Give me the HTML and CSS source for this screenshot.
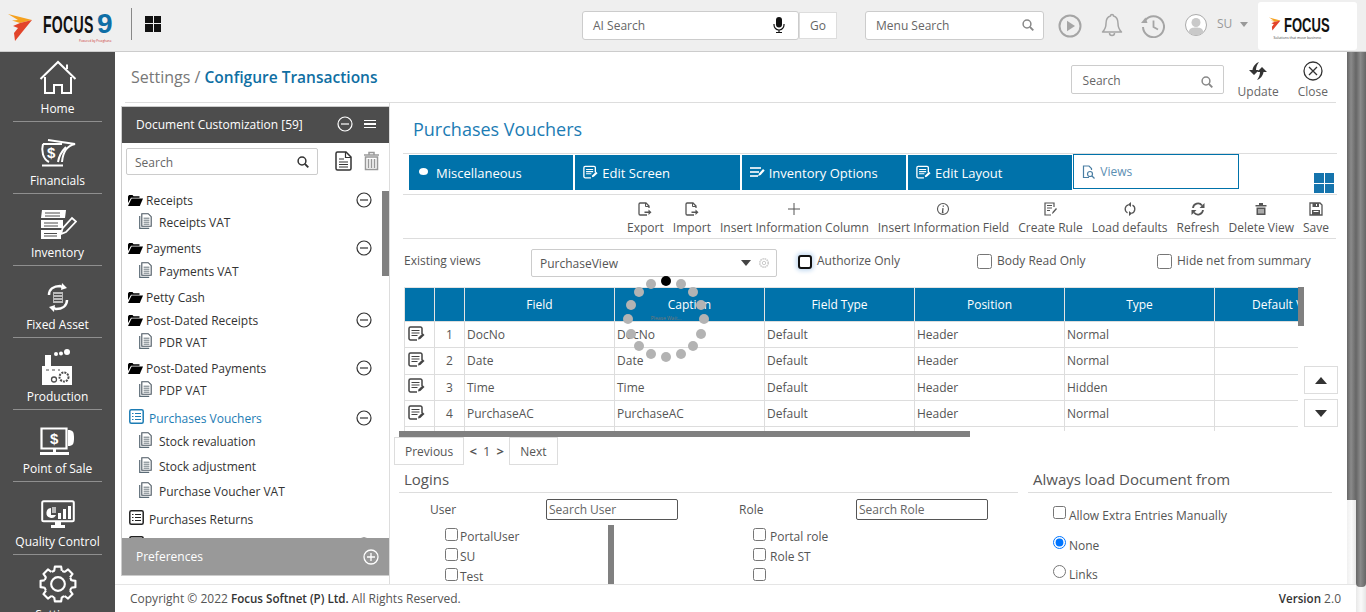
FILE: index.html
```html
<!DOCTYPE html>
<html lang="en">
<head>
  <meta charset="UTF-8" />
  <meta name="viewport" content="width=device-width, initial-scale=1.0"/>
  <title>Configure Transactions</title>
  <link rel="stylesheet" href="styles.css">
</head>
<body>
  <svg class="defs" xmlns="http://www.w3.org/2000/svg">
    <symbol id="i-minus" viewBox="0 0 16 16"><circle cx="8" cy="8" r="7" fill="none" stroke="currentColor" stroke-width="1.2"/><path d="M4 8h8" stroke="currentColor" stroke-width="1.2"/></symbol>
    <symbol id="i-folder" viewBox="0 0 15 12"><path fill="currentColor" d="M0 2.5 1 1h3.500l1 1.200h6v1.600H3L0 9z"/><path fill="currentColor" d="M3.600 4.600H15L11.800 12H0z"/></symbol>
    <symbol id="i-sheet" viewBox="0 0 13 16"><path d="M.7 3v12.300h9.500" fill="none" stroke="#5b6b76" stroke-width="1.200"/><path d="M2.800.7h6.400l3 3v9.600H2.800z" fill="#fff" stroke="#4a5660" stroke-width="1.100"/><path d="M4.600 5.200h5.800M4.600 7.200h5.800M4.600 9.200h5.800M4.600 11.200h5.800" stroke="#69747c"/></symbol>
    <symbol id="i-listbox" viewBox="0 0 15 15"><rect x=".8" y=".8" width="13.400" height="13.400" rx="1.500" fill="none" stroke="currentColor" stroke-width="1.500"/><path d="M3 4.500h1.500M3 7.500h1.500M3 10.500h1.500M6 4.500h6M6 7.500h6M6 10.500h6" stroke="currentColor" stroke-width="1.200"/></symbol>
    <symbol id="i-edit" viewBox="0 0 17 16"><path d="M14 8V2.500A1.500 1.500 0 0 0 12.500 1h-10A1.500 1.500 0 0 0 1 2.500v10A1.500 1.500 0 0 0 2.500 14H9" fill="none" stroke="currentColor" stroke-width="1.500"/><path d="M3.500 4.500h8M3.500 7h8M3.500 9.500h6" stroke="currentColor" stroke-width="1.200"/><path d="m10 13.500.6-2.300 4.200-4 1.700 1.700-4.200 4z" fill="currentColor"/></symbol>
    <symbol id="i-docarrow" viewBox="0 0 14 14"><path d="M9 13H2.200A1.200 1.200 0 0 1 1 11.800V2.200A1.200 1.200 0 0 1 2.200 1h5.800L11 4v2" fill="none" stroke="currentColor" stroke-width="1.300"/><path d="M7.500 1v3.500H11" fill="none" stroke="currentColor"/><path d="M6.500 9.500h4V7.500l3 2.700-3 2.700v-2h-4z" fill="currentColor"/></symbol>
    <symbol id="i-search" viewBox="0 0 12 12"><circle cx="5" cy="5" r="3.900" fill="none" stroke="currentColor" stroke-width="1.500"/><path d="m8 8 3.300 3.300" stroke="currentColor" stroke-width="1.800"/></symbol>
    <symbol id="i-flash" viewBox="0 0 24 27"><path fill="#f5a11e" d="M0 0 24 6 12 9 4 6.500 10 6z"/><path fill="#e2442a" d="M24 6 15 17 7 27 6 19 10 14 5 12 12 9z"/></symbol>
  </svg>

  <div class="app">
    <header class="topbar">
      <div class="brand">
        <svg class="brand-mark"><use href="#i-flash"/></svg>
        <span class="brand-name">FOCUS</span><span class="brand-nine">9</span>
        <span class="brand-sub">Powered by Proxghana</span>
      </div>
      <span class="brand-rule"></span>
      <div class="apps-icon"><i></i><i></i><i></i><i></i></div>

      <div class="ai-search">
        <span>AI Search</span>
        <svg class="mic" viewBox="0 0 12 16"><rect x="3" y="0" width="6" height="10.500" rx="3" fill="#111"/><path d="M1 7v1a5 5 0 0 0 10 0V7M6 13v2M3 15.500h6" fill="none" stroke="#111" stroke-width="1.200"/></svg>
      </div>
      <button class="go">Go</button>
      <div class="menu-search">
        <span>Menu Search</span>
        <svg class="search-ico" viewBox="0 0 12 12"><use href="#i-search"/></svg>
      </div>

      <svg class="top-ico play" viewBox="0 0 24 24"><circle cx="12" cy="12" r="10.500" fill="none" stroke="currentColor" stroke-width="2"/><path d="M9 6.800v10.400l8-5.200z" fill="currentColor"/></svg>
      <svg class="top-ico bell" viewBox="0 0 22 24"><path d="M11 1.500c1 0 1.500.7 1.500 1.500 3.500 1 4.500 4 4.500 7.500 0 4 1 6 3.500 8.500h-19C4 16.500 5 14.500 5 10.500 5 7 6 4 9.500 3c0-.8.500-1.500 1.500-1.500zM8.500 20c0 3.300 5 3.300 5 0" fill="none" stroke="currentColor" stroke-width="1.500" stroke-linejoin="round"/></svg>
      <svg class="top-ico hist" viewBox="0 0 24 24"><path d="M4 6.500A10.500 10.500 0 1 1 2 13" fill="none" stroke="currentColor" stroke-width="2"/><path d="M0 9h6.500L4.500 3.500z" fill="currentColor"/><path d="M12.500 6.500V13l4.500 2.500" fill="none" stroke="currentColor" stroke-width="1.800"/></svg>
      <svg class="top-ico avatar" viewBox="0 0 22 22"><circle cx="11" cy="11" r="10.500" fill="#fff" stroke="#aaa"/><circle cx="11" cy="8.500" r="4.500" fill="#c9c9c9"/><path d="M3.500 18c1-4 4-4.500 7.500-4.500s6.500.5 7.500 4.500a10.500 10.500 0 0 1-15 0z" fill="#c9c9c9"/></svg>
      <span class="user-name">SU</span>
      <span class="user-caret"></span>
      <div class="corner-logo">
        <svg class="corner-mark"><use href="#i-flash"/></svg>
        <div class="corner-text">
          <span class="corner-name">FOCUS</span>
          <span class="corner-sub">Solutions that move business</span>
        </div>
      </div>
    </header>

    <div class="shell">
      <nav class="sidebar">
        <a class="nav-item">
          <svg class="nav-ico" width="38" height="38" viewBox="0 0 38 38"><path d="M1.500 20 19 3l17.500 17M28 10V5.500M6 18v16h9v-8h8v8h9V18" fill="none" stroke="#fff" stroke-width="2"/></svg>
          <span>Home</span>
        </a>
        <a class="nav-item">
          <svg class="nav-ico" width="38" height="32" viewBox="0 0 38 32"><path d="M4 7c-2 7 0 15 6 18M4 7h19M3 28.500h21M9 3l27 4c-8 2-12 7-13 18M27 10c-4 4-7 9-8 15" fill="none" stroke="#fff" stroke-width="2"/><text x="8" y="21" class="nav-glyph">$</text></svg>
          <span>Financials</span>
        </a>
        <a class="nav-item">
          <svg class="nav-ico" width="38" height="32" viewBox="0 0 38 32"><path d="M3 1h24l-1 8H2zM2 11h22v8H2zM2 21h20v9H2z" fill="#fff"/><path d="M6 4h15M6 7h15M5 14h14M5 17h14M5 24.500h13M5 27h13" stroke="#4d4d4d"/><path d="m22 25 1.500-5.500L33 9l4 3.500L27 23z" fill="#4d4d4d" stroke="#fff" stroke-width="1.800"/></svg>
          <span>Inventory</span>
        </a>
        <a class="nav-item">
          <svg class="nav-ico" width="26" height="30" viewBox="0 0 26 30"><path d="M4 12C4 6 9 3 15 3l4 2M22 17c0 6-5 9-11 9l-4-2" fill="none" stroke="#fff" stroke-width="2.500"/><path d="m17 0 5 5-6 2zM9 29l-5-5 6-2z" fill="#fff"/><path d="M8 9h10v11H8z" fill="#bbb"/><path d="M9 11.500h8M9 14.500h8M9 17.500h8" stroke="#4d4d4d"/></svg>
          <span>Fixed Asset</span>
        </a>
        <a class="nav-item">
          <svg class="nav-ico" width="32" height="36" viewBox="0 0 32 36"><path d="M3 6h6v15H3zM0 17h30v19H0z" fill="#fff"/><circle cx="25" cy="3" r="3" fill="#fff"/><circle cx="19" cy="4.500" r="2" fill="#fff"/><circle cx="14" cy="5" r="2" fill="#fff"/><circle cx="22" cy="28" r="4.500" fill="none" stroke="#4d4d4d" stroke-width="2" stroke-dasharray="2 1"/><circle cx="12" cy="30.500" r="2.500" fill="none" stroke="#4d4d4d" stroke-width="1.300"/><path d="M4 21h3M10 21h3M16 21h2" stroke="#4d4d4d"/></svg>
          <span>Production</span>
        </a>
        <a class="nav-item">
          <svg class="nav-ico" width="38" height="30" viewBox="0 0 38 30"><path d="M2.500 1.500h25v20h-25z" fill="none" stroke="#fff" stroke-width="2.200"/><path d="M29 3c5 0 6 2 6 8s-1 8-6 8z" fill="#fff"/><path d="M14 21h3v4h-3zM1 25h29v3H1z" fill="#fff"/><text x="11" y="17" class="nav-glyph">$</text></svg>
          <span>Point of Sale</span>
        </a>
        <a class="nav-item">
          <svg class="nav-ico" width="34" height="30" viewBox="0 0 34 30"><rect x="1.200" y="1.200" width="31.600" height="20" rx="1.500" fill="none" stroke="#fff" stroke-width="2"/><path d="M14 22h6v3h-6zM10 25h14v3H10z" fill="#fff"/><path d="M10 8a5 5 0 1 0 5 7h-5z" fill="#fff"/><path d="M11 7l4 0 0 6h-4z" fill="#bbb"/><path d="M17 13h3v6h-3zM22 9h3v10h-3zM27 6h3v13h-3z" fill="#fff"/></svg>
          <span>Quality Control</span>
        </a>
        <a class="nav-item">
          <svg class="nav-ico" width="38" height="38" viewBox="0 0 36 36"><circle cx="18" cy="18" r="13" fill="none" stroke="#fff" stroke-width="2" stroke-dasharray="2.950 7.260" stroke-dashoffset="-3.630"/><g fill="none" stroke="#fff" stroke-width="2" stroke-linejoin="round"><path id="tooth" d="M14.400 5.500 15 1.500h6l.6 4"/><use href="#tooth" transform="rotate(45 18 18)"/><use href="#tooth" transform="rotate(90 18 18)"/><use href="#tooth" transform="rotate(135 18 18)"/><use href="#tooth" transform="rotate(180 18 18)"/><use href="#tooth" transform="rotate(225 18 18)"/><use href="#tooth" transform="rotate(270 18 18)"/><use href="#tooth" transform="rotate(315 18 18)"/></g><circle cx="18" cy="18" r="6.500" fill="none" stroke="#fff" stroke-width="2"/></svg>
          <span>Settings</span>
        </a>
      </nav>

      <div class="workspace">
        <div class="workspace-main">
          <div class="page">
            <div class="page-head">
              <h1 class="crumbs">Settings / <b>Configure Transactions</b></h1>
              <div class="head-search">
                <span>Search</span>
                <svg class="search-ico" viewBox="0 0 12 12"><use href="#i-search"/></svg>
              </div>
              <a class="head-btn update">
                <svg width="20" height="20" viewBox="0 0 20 20"><path d="M1 9h3.500C5 5 8 2 11 1 9 4 8 6 8 9h3l-5 5z" fill="#333"/><path d="M19 11h-3.500c-.5 4-3.500 7-6.500 8 2-3 3-5 3-8H9l5-5z" fill="#333"/></svg>
                <span>Update</span>
              </a>
              <a class="head-btn close">
                <svg width="20" height="20" viewBox="0 0 20 20"><circle cx="10" cy="10" r="9" fill="none" stroke="#333" stroke-width="1.300"/><path d="m6 6 8 8M14 6l-8 8" stroke="#333" stroke-width="1.300"/></svg>
                <span>Close</span>
              </a>
            </div>

            <div class="page-body">
              <aside class="panel">
                <div class="panel-head">
                  <span>Document Customization [59]</span>
                  <svg class="panel-minus" width="16" height="16"><use href="#i-minus"/></svg>
                  <span class="burger"><i></i><i></i><i></i></span>
                </div>
                <div class="panel-search">
                  <div class="tree-search">
                    <span>Search</span>
                    <svg class="search-ico" viewBox="0 0 12 12"><use href="#i-search"/></svg>
                  </div>
                  <svg class="doc-ico" width="17" height="20" viewBox="0 0 17 20"><path d="M1 2.500A1.500 1.500 0 0 1 2.500 1H11l5 5v11.500a1.500 1.500 0 0 1-1.500 1.500h-12A1.500 1.500 0 0 1 1 17.500z" fill="none" stroke="#333" stroke-width="1.500"/><path d="M10.500 1v5.500H16M4 8h5M4 11h9M4 13.500h9M4 16h9" fill="none" stroke="#333" stroke-width="1.200"/></svg>
                  <svg class="trash-ico" width="17" height="20" viewBox="0 0 17 20"><path d="M1 4h15M6 3.500V1.500h5v2M2.500 6h12v12.500h-12zM5.500 8v9M8.500 8v9M11.500 8v9" fill="none" stroke="#999" stroke-width="1.500"/></svg>
                </div>
                <div class="tree">
                  <span class="tree-thumb"></span>
                  <div class="row group"><svg class="ico-folder"><use href="#i-folder"/></svg><span>Receipts</span><svg class="row-minus"><use href="#i-minus"/></svg></div>
                  <div class="row sub"><svg class="ico-sheet"><use href="#i-sheet"/></svg><span>Receipts VAT</span></div>
                  <div class="row group gap26"><svg class="ico-folder"><use href="#i-folder"/></svg><span>Payments</span><svg class="row-minus"><use href="#i-minus"/></svg></div>
                  <div class="row sub gap23"><svg class="ico-sheet"><use href="#i-sheet"/></svg><span>Payments VAT</span></div>
                  <div class="row group gap26"><svg class="ico-folder"><use href="#i-folder"/></svg><span>Petty Cash</span></div>
                  <div class="row group gap23"><svg class="ico-folder"><use href="#i-folder"/></svg><span>Post-Dated Receipts</span><svg class="row-minus"><use href="#i-minus"/></svg></div>
                  <div class="row sub"><svg class="ico-sheet"><use href="#i-sheet"/></svg><span>PDR VAT</span></div>
                  <div class="row group gap26"><svg class="ico-folder"><use href="#i-folder"/></svg><span>Post-Dated Payments</span><svg class="row-minus"><use href="#i-minus"/></svg></div>
                  <div class="row sub"><svg class="ico-sheet"><use href="#i-sheet"/></svg><span>PDP VAT</span></div>
                  <div class="row group gap28 active"><svg class="ico-list"><use href="#i-listbox"/></svg><span>Purchases Vouchers</span><svg class="row-minus"><use href="#i-minus"/></svg></div>
                  <div class="row sub gap23"><svg class="ico-sheet"><use href="#i-sheet"/></svg><span>Stock revaluation</span></div>
                  <div class="row sub gap25"><svg class="ico-sheet"><use href="#i-sheet"/></svg><span>Stock adjustment</span></div>
                  <div class="row sub gap25"><svg class="ico-sheet"><use href="#i-sheet"/></svg><span>Purchase Voucher VAT</span></div>
                  <div class="row group gap28"><svg class="ico-list"><use href="#i-listbox"/></svg><span>Purchases Returns</span></div>
                  <div class="row group gap26"><svg class="ico-list"><use href="#i-listbox"/></svg><span></span><svg class="row-minus"><use href="#i-minus"/></svg></div>
                </div>
                <div class="panel-foot">
                  <span>Preferences</span>
                  <svg width="16" height="16" viewBox="0 0 16 16"><circle cx="8" cy="8" r="7" fill="none" stroke="#fff" stroke-width="1.300"/><path d="M4 8h8M8 4v8" stroke="#fff" stroke-width="1.300"/></svg>
                </div>
              </aside>

              <section class="detail">
                <h2 class="detail-title">Purchases Vouchers</h2>

                <div class="tabs">
                  <a class="tab"><svg width="11" height="9" viewBox="0 0 11 9"><ellipse cx="5.500" cy="4.500" rx="4.500" ry="3.500" fill="#fff"/></svg>Miscellaneous</a>
                  <a class="tab"><svg class="tab-edit" width="15" height="15"><use href="#i-edit"/></svg>Edit Screen</a>
                  <a class="tab"><svg class="tab-inv" width="15" height="13" viewBox="0 0 15 13"><path d="M0 1h11v2H0zM0 5h9v2H0zM0 9h8v2H0z" fill="#cfe3ef"/><path d="m8 10 1-2.500L13 3l1.700 1.500-4 4.500z" fill="#fff"/></svg>Inventory Options</a>
                  <a class="tab"><svg class="tab-edit" width="15" height="15"><use href="#i-edit"/></svg>Edit Layout</a>
                  <a class="tab current"><svg width="14" height="14" viewBox="0 0 14 14"><path d="M7 12.500H1.500V1h5.500l2.500 2.500V5" fill="none" stroke="#4a7ea3" stroke-width="1.200"/><circle cx="8" cy="9" r="2.500" fill="none" stroke="#4a7ea3" stroke-width="1.200"/><path d="m10 11 2.500 2.500" stroke="#4a7ea3" stroke-width="1.300"/></svg>Views</a>
                  <div class="view-grid"><i></i><i></i><i></i><i></i></div>
                </div>

                <div class="toolbar">
                  <a class="tool"><svg width="14" height="14"><use href="#i-docarrow"/></svg><span>Export</span></a>
                  <a class="tool"><svg width="14" height="14"><use href="#i-docarrow"/></svg><span>Import</span></a>
                  <a class="tool"><svg width="14" height="14" viewBox="0 0 14 14"><path d="M7 1v12M1 7h12" stroke="currentColor"/></svg><span>Insert Information Column</span></a>
                  <a class="tool"><svg width="14" height="14" viewBox="0 0 14 14"><circle cx="7" cy="7" r="5.500" fill="none" stroke="currentColor" stroke-width="1.100"/><path d="M7.300 3.500v1.300M7 6.200l-.5 4.300h1" fill="none" stroke="currentColor" stroke-width="1.300"/></svg><span>Insert Information Field</span></a>
                  <a class="tool"><svg width="14" height="14" viewBox="0 0 14 14"><path d="M11 5V1H2v12h6" fill="none" stroke="currentColor" stroke-width="1.200"/><path d="M4 3.500h5M4 6h5M4 8.500h3" stroke="currentColor"/><path d="m9 12 .5-2L13 6l1 1-3.500 4z" fill="currentColor"/></svg><span>Create Rule</span></a>
                  <a class="tool"><svg width="14" height="14" viewBox="0 0 14 14"><path d="M9.500 3.200a4.300 4.300 0 0 1-1 8M4.500 10.800a4.300 4.300 0 0 1 1-8" fill="none" stroke="currentColor" stroke-width="1.300"/><path d="M8 0v5L5 2.500zM6 14V9l3 2.500z" fill="currentColor"/></svg><span>Load defaults</span></a>
                  <a class="tool"><svg width="14" height="14" viewBox="0 0 14 14"><path d="M2 6a5 5 0 0 1 9-2.500M12 8a5 5 0 0 1-9 2.500" fill="none" stroke="currentColor" stroke-width="1.800"/><path d="M13.500 1v5h-5zM.5 13V8h5z" fill="currentColor"/></svg><span>Refresh</span></a>
                  <a class="tool"><svg width="14" height="14" viewBox="0 0 14 14"><path d="M1.500 3h11V4.500h-11zM5 3V1h4v2zM2.500 5.500h9V13h-9z" fill="currentColor"/><path d="M5 7v4.500M7 7v4.500M9 7v4.500" stroke="#fff"/></svg><span>Delete View</span></a>
                  <a class="tool"><svg width="14" height="14" viewBox="0 0 14 14"><path d="M1 1h10l2 2v10H1z" fill="none" stroke="currentColor" stroke-width="1.300"/><path d="M3.500 1h6.500v4H3.500zM3 8h8v5H3z" fill="currentColor"/><path d="M7.500 2v2M4.500 9.500h5" stroke="#fff"/></svg><span>Save</span></a>
                </div>

                <div class="view-form">
                  <label class="view-label">Existing views</label>
                  <div class="view-select">
                    <span>PurchaseView</span>
                    <span class="select-caret"></span>
                    <svg width="12" height="12" viewBox="0 0 12 12"><circle cx="6" cy="6" r="4.200" fill="none" stroke="#ccc" stroke-width="1.600" stroke-dasharray="1.600 .6"/><circle cx="6" cy="6" r="1.700" fill="none" stroke="#ccc"/></svg>
                  </div>
                  <label class="view-check first"><input type="checkbox" class="big-check focused"><span>Authorize Only</span></label>
                  <label class="view-check"><input type="checkbox" class="big-check"><span>Body Read Only</span></label>
                  <label class="view-check"><input type="checkbox" class="big-check"><span>Hide net from summary</span></label>
                </div>

                <div class="grid-row">
                  <div class="grid-clip">
                    <table class="fields">
                      <colgroup><col class="c-sm"><col class="c-sm"><col class="c-lg"><col class="c-lg"><col class="c-lg"><col class="c-lg"><col class="c-lg"><col class="c-lg"></colgroup>
                      <thead>
                        <tr><th></th><th></th><th>Field</th><th>Caption</th><th>Field Type</th><th>Position</th><th>Type</th><th>Default Value</th></tr>
                      </thead>
                      <tbody>
                        <tr><td class="cell-ico"><svg width="17" height="16"><use href="#i-edit"/></svg></td><td class="cell-num">1</td><td>DocNo</td><td>DocNo</td><td>Default</td><td>Header</td><td>Normal</td><td></td></tr>
                        <tr><td class="cell-ico"><svg width="17" height="16"><use href="#i-edit"/></svg></td><td class="cell-num">2</td><td>Date</td><td>Date</td><td>Default</td><td>Header</td><td>Normal</td><td></td></tr>
                        <tr><td class="cell-ico"><svg width="17" height="16"><use href="#i-edit"/></svg></td><td class="cell-num">3</td><td>Time</td><td>Time</td><td>Default</td><td>Header</td><td>Hidden</td><td></td></tr>
                        <tr><td class="cell-ico"><svg width="17" height="16"><use href="#i-edit"/></svg></td><td class="cell-num">4</td><td>PurchaseAC</td><td>PurchaseAC</td><td>Default</td><td>Header</td><td>Normal</td><td></td></tr>
                        <tr><td></td><td></td><td></td><td></td><td></td><td></td><td></td><td></td></tr>
                      </tbody>
                    </table>
                  </div>
                  <span class="grid-vthumb"></span>
                  <div class="move-btns">
                    <button class="move"><span class="tri-up"></span></button>
                    <button class="move"><span class="tri-down"></span></button>
                  </div>
                </div>
                <div class="grid-hthumb"></div>

                <div class="pager">
                  <button class="page-btn">Previous</button>
                  <span class="page-nums"><b>&lt;</b><span>1</span><b>&gt;</b></span>
                  <button class="page-btn">Next</button>
                </div>

                <div class="bottom">
                  <div class="logins">
                    <h3 class="sec-title">Logins</h3>
                    <div class="who-cols">
                      <div class="who">
                        <div class="who-head"><label>User</label><input class="who-input" type="text" placeholder="Search User"></div>
                        <div class="who-body">
                          <div class="who-list">
                            <label class="who-item"><input type="checkbox"><span>PortalUser</span></label>
                            <label class="who-item"><input type="checkbox"><span>SU</span></label>
                            <label class="who-item"><input type="checkbox"><span>Test</span></label>
                          </div>
                          <span class="who-thumb"></span>
                        </div>
                      </div>
                      <div class="who role">
                        <div class="who-head"><label>Role</label><input class="who-input" type="text" placeholder="Search Role"></div>
                        <div class="who-body">
                          <div class="who-list">
                            <label class="who-item"><input type="checkbox"><span>Portal role</span></label>
                            <label class="who-item"><input type="checkbox"><span>Role ST</span></label>
                            <label class="who-item"><input type="checkbox"><span></span></label>
                          </div>
                        </div>
                      </div>
                    </div>
                  </div>
                  <div class="load-from">
                    <h3 class="sec-title">Always load Document from</h3>
                    <div class="load-opts">
                      <label class="load-opt"><input type="checkbox"><span>Allow Extra Entries Manually</span></label>
                      <label class="load-opt"><input type="radio" name="load" checked><span>None</span></label>
                      <label class="load-opt"><input type="radio" name="load"><span>Links</span></label>
                    </div>
                  </div>
                </div>

                <svg class="spinner" width="90" height="90" viewBox="-45 -45 90 90">
                  <g fill="#b3b3b3">
                    <circle cx="15" cy="-36" r="5"/><circle cx="27" cy="-28" r="5"/><circle cx="35" cy="-15" r="5"/><circle cx="38" cy="-1" r="5"/>
                    <circle cx="35" cy="14" r="5"/><circle cx="27" cy="26" r="5"/><circle cx="15" cy="34" r="5"/><circle cx="0" cy="37" r="5"/>
                    <circle cx="-15" cy="34" r="5"/><circle cx="-27" cy="26" r="5"/><circle cx="-35" cy="14" r="5"/><circle cx="-38" cy="-1" r="5"/>
                    <circle cx="-35" cy="-15" r="5"/><circle cx="-27" cy="-28" r="5"/><circle cx="-15" cy="-36" r="5"/>
                  </g>
                  <circle cx="0" cy="-39" r="5" fill="#000"/>
                  <text x="0" y="0" class="spin-text">Please Wait...</text>
                </svg>
              </section>
            </div>
          </div>
          <div class="inner-scroll"><span></span></div>
        </div>
        <footer class="footer">
          <span>Copyright © 2022 <b>Focus Softnet (P) Ltd.</b> All Rights Reserved.</span>
          <span><b>Version</b> 2.0</span>
        </footer>
      </div>
      <div class="outer-scroll"><span></span></div>
    </div>
  </div>
</body>
</html>
```

FILE: styles.css
```css
* {
  margin: 0;
  padding: 0;
  box-sizing: border-box;
  font-family: 'Open Sans', sans-serif;
}

body {
  background: #fff;
  color: #555;
  font-size: 12px;
  overflow: hidden;
}

.defs {
  display: none;
}

button {
  background: #fff;
  color: #555;
}

.app {
  width: 1366px;
  height: 612px;
  display: flex;
  flex-direction: column;
  overflow: hidden;
}

/* top bar */
.topbar {
  height: 52px;
  flex: none;
  background: #efefef;
  border-bottom: 1px solid #ccc;
  display: flex;
  align-items: center;
  padding-left: 8px;
  position: relative;
  z-index: 2;
}

.brand {
  width: 115px;
  height: 40px;
  display: flex;
  align-items: center;
  position: relative;
}

.brand-mark {
  width: 24px;
  height: 27px;
  margin-right: 11px;
  margin-top: 4px;
}

.brand-name {
  font-family: 'Liberation Sans', sans-serif;
  font-size: 23.500px;
  font-weight: 700;
  color: #111;
  letter-spacing: .4px;
  transform: scaleX(.6);
  transform-origin: left;
  width: 54px;
}

.brand-nine {
  font-family: 'Liberation Sans', sans-serif;
  font-size: 28px;
  font-weight: 700;
  color: #0e6ea6;
  margin-top: -4px;
}

.brand-sub {
  position: absolute;
  left: 71px;
  top: 33px;
  font-size: 3px;
  color: #c33;
  white-space: nowrap;
}

.brand-rule {
  width: 1px;
  height: 32px;
  background: #888;
  margin-left: 8px;
  margin-top: -3px;
}

.apps-icon {
  width: 16px;
  height: 16px;
  margin-left: 13px;
  margin-top: -4px;
  display: grid;
  grid-template-columns: 1fr 1fr;
  gap: 1px;
}

.apps-icon i {
  background: #111;
}

.ai-search,
.menu-search {
  height: 29px;
  background: #fff;
  border: 1px solid #ccc;
  border-radius: 3px;
  display: flex;
  align-items: center;
  padding: 0 10px;
  color: #666;
  margin-top: -1px;
}

.ai-search {
  width: 217px;
  margin-left: 421px;
  justify-content: space-between;
}

.mic {
  width: 12px;
  height: 16px;
  margin-right: 3px;
}

.go {
  width: 38px;
  height: 27px;
  border: 1px solid #ddd;
  margin-top: -1px;
  font-size: 12px;
  color: #666;
}

.menu-search {
  width: 179px;
  margin-left: 28px;
  justify-content: space-between;
  padding-right: 9px;
}

.search-ico {
  width: 12px;
  height: 12px;
  color: #888;
}

.top-ico {
  flex: none;
  color: #a5a5a5;
}

.play {
  width: 24px;
  height: 24px;
  margin-left: 14px;
}

.bell {
  width: 22px;
  height: 24px;
  margin-left: 19px;
  margin-top: -1px;
}

.hist {
  width: 24px;
  height: 24px;
  margin-left: 18px;
}

.avatar {
  width: 22px;
  height: 22px;
  margin-left: 20px;
  margin-top: -2px;
}

.user-name {
  margin-left: 10px;
  width: 16px;
  color: #999;
  margin-top: -4px;
}

.user-caret {
  width: 0;
  height: 0;
  margin-left: 7px;
  margin-top: -3px;
  border-left: 4px solid transparent;
  border-right: 4px solid transparent;
  border-top: 5px solid #999;
}

.corner-logo {
  width: 99px;
  height: 48px;
  margin-left: 10px;
  background: #fff;
  border-radius: 3px;
  display: flex;
  padding: 10px 0 0 11px;
}

.corner-mark {
  width: 22px;
  height: 24px;
}

.corner-text {
  display: flex;
  flex-direction: column;
  margin-left: 3px;
  margin-top: 3px;
}

.corner-name {
  font-family: 'Liberation Sans', sans-serif;
  font-size: 21px;
  line-height: 20px;
  font-weight: 700;
  color: #111;
  transform: scaleX(.62);
  transform-origin: left;
}

.corner-sub {
  font-size: 3.500px;
  line-height: 6px;
  color: #444;
  white-space: nowrap;
  margin-left: -10px;
}

/* sidebar */
.shell {
  flex: 1;
  display: flex;
  min-height: 0;
}

.sidebar {
  width: 115px;
  flex: none;
  background: #4d4d4d;
  display: flex;
  flex-direction: column;
  align-items: center;
  overflow: hidden;
  padding-top: 0;
}

.nav-item {
  width: 89px;
  height: 72.200px;
  flex: none;
  border-bottom: 1px solid #8f8f8f;
  display: flex;
  flex-direction: column;
  align-items: center;
  color: #fff;
  position: relative;
}

.nav-item:first-child {
  height: 69.500px;
}

.nav-item:last-child {
  border-bottom: 0;
}

.nav-ico {
  position: absolute;
  left: 50%;
  transform: translateX(-50%);
  bottom: 24px;
}

.nav-item span {
  position: absolute;
  bottom: 4px;
  white-space: nowrap;
  line-height: 17px;
}

.nav-glyph {
  font-family: 'Liberation Sans', sans-serif;
  font-size: 15px;
  font-weight: 700;
  fill: #fff;
}

/* workspace */
.workspace {
  width: 1241px;
  flex: none;
  display: flex;
  flex-direction: column;
}

.workspace-main {
  height: 532px;
  flex: none;
  display: flex;
}

.page {
  width: 1232px;
  flex: none;
}

.inner-scroll {
  width: 9px;
  flex: none;
  background: linear-gradient(90deg, #f0f0f0, #fafafa, #e6e6e6);
}

.inner-scroll span {
  display: block;
  height: 448px;
  background: linear-gradient(90deg, #666, #8a8a8a 45%, #666);
}

.outer-scroll {
  width: 10px;
  flex: none;
  background: linear-gradient(90deg, #e8e8e8, #fafafa, #e6e6e6);
}

.outer-scroll span {
  display: block;
  height: 535px;
  border-radius: 0 0 4px 4px;
  background: linear-gradient(90deg, #666, #8a8a8a 45%, #666);
}

.page-head {
  height: 51px;
  margin: 0 11px 0 10px;
  border-bottom: 1px solid #ddd;
  display: flex;
  align-items: center;
  padding-left: 6px;
}

.crumbs {
  font-size: 16px;
  font-weight: 400;
  color: #777;
  margin-top: -1px;
}

.crumbs b {
  font-size: 15.500px;
  font-weight: 600;
  color: #0f6fa3;
}

.head-search {
  width: 153px;
  height: 29px;
  margin-left: auto;
  margin-top: 5px;
  border: 1px solid #ccc;
  border-radius: 2px;
  display: flex;
  align-items: center;
  justify-content: space-between;
  padding: 1px 10px 0 11px;
  color: #666;
}

.head-search .search-ico {
  margin-top: 4px;
}

.head-btn {
  display: flex;
  flex-direction: column;
  align-items: center;
  color: #666;
  line-height: 17px;
  margin-top: 7px;
}

.update {
  margin-left: 14px;
}

.close {
  margin-left: 19px;
  margin-right: 8px;
}

.head-btn svg {
  margin-bottom: 2px;
}

.page-body {
  height: 481px;
  display: flex;
}

/* tree panel */
.panel {
  width: 268px;
  height: 470px;
  flex: none;
  margin: 3px 0 0 6px;
  border: 1px solid #ccc;
  border-right: 0;
  display: flex;
  flex-direction: column;
}

.panel-head {
  height: 36px;
  flex: none;
  background: #4d4d4d;
  color: #fff;
  display: flex;
  align-items: center;
  padding: 0 0 2px 14px;
}

.panel-minus {
  color: #fff;
  margin-left: auto;
}

.burger {
  width: 12px;
  margin: 0 13px 0 11px;
  display: flex;
  flex-direction: column;
  gap: 2px;
}

.burger i {
  height: 1.500px;
  background: #fff;
}

.panel-search {
  height: 38px;
  flex: none;
  display: flex;
  align-items: flex-start;
  padding: 5px 0 0 4px;
}

.tree-search {
  width: 192px;
  height: 27px;
  border: 1px solid #ccc;
  border-radius: 2px;
  display: flex;
  align-items: center;
  justify-content: space-between;
  padding: 1px 8px 0;
  color: #666;
}

.tree-search .search-ico {
  color: #333;
}

.doc-ico {
  margin: 3px 0 0 17px;
}

.trash-ico {
  margin: 3px 0 0 11px;
}

.tree {
  flex: 1;
  min-height: 0;
  overflow: hidden;
  position: relative;
  padding-top: 8px;
}

.tree-thumb {
  position: absolute;
  right: 0;
  top: 10px;
  width: 7px;
  height: 85px;
  background: #808080;
}

.row {
  height: 22px;
  display: flex;
  align-items: center;
  color: #333;
  white-space: nowrap;
}

.gap23 {
  margin-top: 1px;
}

.gap25 {
  margin-top: 3px;
}

.gap26 {
  margin-top: 4px;
}

.gap28 {
  margin-top: 6px;
}

.group {
  padding-left: 6px;
}

.sub {
  padding-left: 17px;
}

.ico-folder {
  width: 15px;
  height: 12px;
  color: #000;
  margin-right: 3px;
}

.ico-list {
  width: 15px;
  height: 15px;
  margin-right: 5px;
  margin-left: 1px;
  margin-top: -3px;
  color: #222;
}

.ico-sheet {
  width: 13px;
  height: 16px;
  margin-right: 7px;
  margin-top: -3px;
}

.row-minus {
  width: 16px;
  height: 16px;
  margin-left: auto;
  margin-right: 17px;
  color: #333;
}

.active,
.active .ico-list {
  color: #1c7cb4;
}

.active .row-minus {
  color: #333;
}

.panel-foot {
  height: 37px;
  flex: none;
  background: #999;
  color: #fff;
  display: flex;
  align-items: center;
  justify-content: space-between;
  padding: 0 10px 0 14px;
  position: relative;
}

/* detail */
.detail {
  width: 957px;
  flex: none;
  height: 481px;
  border-left: 1px solid #ddd;
  overflow: hidden;
  position: relative;
}

.detail-title {
  height: 50px;
  padding: 14px 0 0 23px;
  font-size: 18px;
  line-height: 25px;
  font-weight: 400;
  color: #1c7cb4;
}

.tabs {
  height: 42px;
  margin: 0 9px 0 13px;
  border-top: 1px solid #ddd;
  border-bottom: 1px solid #ddd;
  display: flex;
  align-items: flex-start;
  padding-left: 6px;
  gap: 2px;
}

.tab {
  width: 164.330px;
  height: 35px;
  margin-top: 1px;
  background: #0072aa;
  color: #fff;
  font-size: 13px;
  display: flex;
  align-items: center;
  padding-left: 8px;
}

.tab svg {
  margin-right: 4px;
}

.tab-edit {
  color: #fff;
}

.tab:first-child {
  padding-left: 9px;
}

.tab:first-child svg {
  margin: -3px 7px 0 0;
}

.tab.current {
  width: 166px;
  height: 35px;
  margin: 0 0 0 -1px;
  background: #fff;
  border: 1px solid #0072aa;
  color: #5c8fb3;
  font-size: 12px;
  padding-left: 8px;
}

.view-grid {
  width: 20px;
  height: 20px;
  margin: 19px 3px 0 auto;
  display: grid;
  grid-template-columns: 1fr 1fr;
  gap: 1px;
}

.view-grid i {
  background: #1574ad;
}

.toolbar {
  height: 44px;
  margin: 0 10px 0 13px;
  border-bottom: 1px solid #ddd;
  display: flex;
  justify-content: flex-end;
  gap: 9px;
  padding: 7px 7px 0 0;
}

.tool {
  display: flex;
  flex-direction: column;
  align-items: center;
  white-space: nowrap;
  color: #555;
  line-height: 17px;
}

.tool svg {
  margin-bottom: 3px;
}

.view-form {
  height: 48px;
  display: flex;
  align-items: flex-start;
  padding: 10px 0 0 14px;
}

.view-label {
  width: 127px;
  line-height: 24px;
  font-size: 12px;
}

.view-select {
  width: 246px;
  height: 28px;
  border: 1px solid #ccc;
  border-radius: 2px;
  display: flex;
  align-items: center;
  padding: 0 6px 0 8px;
}

.select-caret {
  width: 0;
  height: 0;
  margin-left: auto;
  margin-right: 7px;
  border-left: 5px solid transparent;
  border-right: 5px solid transparent;
  border-top: 6px solid #444;
}

.view-check {
  width: 180px;
  display: flex;
  align-items: flex-start;
  line-height: 24px;
  font-size: 12px;
}

.view-check.first {
  width: 179px;
  margin-left: 21px;
}

.big-check {
  width: 15px;
  height: 15px;
  margin: 5px 5px 0 0;
}

.focused {
  appearance: none;
  width: 14px;
  height: 14px;
  margin: 6px 5px 0 0;
  border: 2px solid #111;
  border-radius: 3px;
  background: #fff;
  box-shadow: 0 0 4px 2px #c7dcf2;
}

.grid-row {
  height: 144px;
  display: flex;
  padding-left: 14px;
}

.grid-clip {
  width: 894px;
  height: 144px;
  flex: none;
  overflow: hidden;
}

.fields {
  width: 960px;
  table-layout: fixed;
  border-collapse: collapse;
  margin: 0;
}

.c-sm {
  width: 30px;
}

.c-lg {
  width: 150px;
}

.fields th {
  height: 34px;
  background: #0072aa;
  color: #fff;
  font-weight: 400;
  border: 1px solid #e3e3e3;
  border-bottom-color: #ddd;
  text-align: center;
}

.fields td {
  height: 26.300px;
  border: 1px solid #ddd;
  padding: 0 2px;
  white-space: nowrap;
  color: #555;
}

.fields .cell-ico {
  padding: 2px 0 0 3px;
  color: #444;
}

.fields .cell-num {
  text-align: center;
}

.grid-vthumb {
  width: 6px;
  height: 39px;
  background: #808080;
  flex: none;
}

.move-btns {
  flex: none;
  margin-top: 79px;
  display: flex;
  flex-direction: column;
  gap: 5px;
}

.move {
  width: 34px;
  height: 28px;
  border: 1px solid #ddd;
  display: flex;
  align-items: center;
  justify-content: center;
}

.tri-up,
.tri-down {
  width: 0;
  height: 0;
  border-left: 6px solid transparent;
  border-right: 6px solid transparent;
}

.tri-up {
  border-bottom: 7px solid #333;
}

.tri-down {
  border-top: 7px solid #333;
}

.grid-hthumb {
  width: 571px;
  height: 6px;
  margin-left: 9px;
  background: #808080;
}

.pager {
  height: 28px;
  margin-left: 4px;
  display: flex;
  align-items: center;
}

.page-btn {
  height: 28px;
  padding: 0 10px;
  border: 1px solid #ddd;
  font-size: 12px;
  color: #555;
}

.page-nums {
  width: 45px;
  display: flex;
  justify-content: center;
  gap: 6px;
  color: #555;
  font-size: 13px;
}

.page-nums b {
  font-weight: 700;
}

.bottom {
  display: flex;
  padding-left: 9px;
}

.sec-title {
  height: 28px;
  padding-left: 5px;
  border-bottom: 1px solid #ddd;
  font-size: 15px;
  font-weight: 400;
  line-height: 29px;
  color: #555;
}

.logins {
  width: 619px;
  flex: none;
}

.load-from {
  width: 304px;
  flex: none;
  margin-left: 10px;
}

.who-cols {
  display: flex;
  padding: 6px 0 0 31px;
}

.who {
  width: 309px;
  flex: none;
}

.who-head {
  display: flex;
  align-items: center;
  height: 21px;
}

.who-head label {
  width: 116px;
}

.role .who-head label {
  width: 117px;
}

.who-input {
  width: 132px;
  height: 21px;
  border: 1px solid #555;
  border-radius: 2px;
  padding: 0 2px;
  font-size: 12px;
  outline: 0;
}

.who-input::placeholder {
  color: #666;
  opacity: 1;
}

.who-body {
  display: flex;
  margin-top: 5px;
}

.who-list {
  width: 178px;
  padding: 3px 0 0 15px;
}

.role .who-list {
  padding-left: 14px;
}

.who-thumb {
  width: 6px;
  height: 70px;
  background: #808080;
}

.who-item {
  height: 20px;
  display: flex;
  align-items: flex-start;
  line-height: 17px;
}

.who-item input {
  width: 13px;
  height: 13px;
  margin: 0 2px 0 0;
}

.role .who-item input {
  margin-right: 4px;
}

.load-opts {
  padding: 13px 0 0 25px;
}

.load-opt {
  height: 29.500px;
  display: flex;
  align-items: flex-start;
  line-height: 20px;
}

.load-opt input {
  width: 13px;
  height: 13px;
  margin: 0 3px 0 0;
}

.spinner {
  position: absolute;
  left: 231px;
  top: 172px;
}

.spin-text {
  font-size: 5px;
  fill: #777;
  text-anchor: middle;
}

/* footer */
.footer {
  height: 28px;
  flex: none;
  border-top: 1px solid #e5e5e5;
  display: flex;
  justify-content: space-between;
  align-items: center;
  padding: 0 15px;
  color: #555;
  width: 1241px;
}

.footer b {
  font-size: 11.600px;
  font-weight: 600;
  color: #333;
}
```
